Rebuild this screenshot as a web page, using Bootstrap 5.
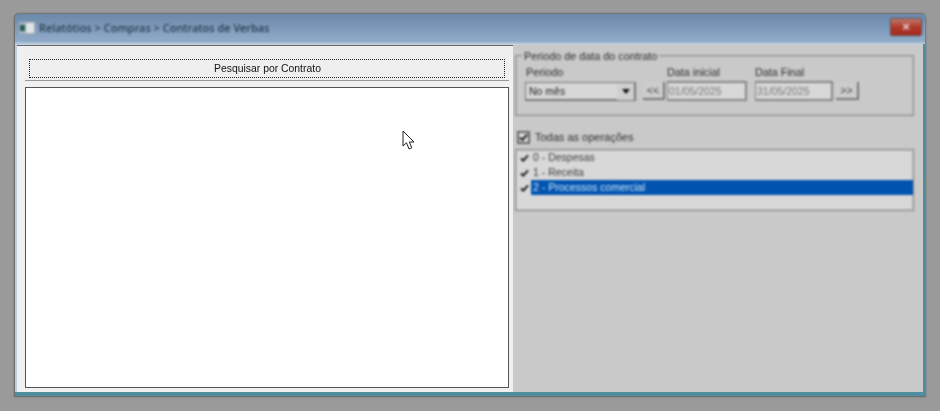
<!DOCTYPE html>
<html lang="pt">
<head>
<meta charset="utf-8">
<title>Contratos de Verbas</title>
<link href="https://cdn.jsdelivr.net/npm/bootstrap@5.3.0/dist/css/bootstrap.min.css" rel="stylesheet">
<style>
html,body{height:411px;overflow:hidden}
body{background:#9a9a9a;font-family:"Liberation Sans",Arial,sans-serif;font-size:11px;color:#111;padding:13px 14px 14px}
.win-frame{position:relative;height:384px;border:1px solid #6e6e6e;border-top-color:#777;border-right-color:#4f8e9e;border-radius:5px 5px 0 0;background:linear-gradient(#6b88aa,#8fabc8 27px,#b9cbdc 30px);box-shadow:0 0 2px #707070}
.win-title{height:30px;padding:0 0 2px 4px;gap:4px;filter:blur(.8px)}
.win-title-text{font-family:"Noto Sans",sans-serif;font-size:11px;color:#24354a;font-weight:500}
.win-close{align-self:flex-start;width:32px;height:18px;margin:4px 3px 0 auto;border:1px solid #6b4b4b;border-radius:2px;background:linear-gradient(#bd7a6e,#b23a2a 50%,#a32c1e);color:#ddd;font-size:13px;font-weight:700;line-height:15px;text-align:center}
.win-edge{height:352px;border-bottom:4px solid #4f8e9e;border-right:2px solid #4f8e9e}
.win-body{height:348px;margin-left:2px;border-top:1px solid #c5d2de;background:#c9c9c9}
.left-pane{width:496px;flex:none;background:#f0f0f0;padding:9px 4px 4px 8px;border-top:1px solid #666}
.search-bar{height:26px;padding:4px;background:#eee;border-bottom:1px solid #9a9a9a}
.search-btn{display:block;width:100%;height:19px;padding:0 0 0 1px;border:1px dotted #222;border-radius:0;background:#efefef;font-size:10.4px;line-height:17px;color:#111}
.search-btn span{display:block;filter:blur(.25px)}
.result-box{height:301px;margin-top:6px;background:#fff;border:1px solid #555}
.right-pane{flex:1;padding:10px 9px 0 2px;filter:blur(.8px);color:#2c2c2c}
.period-group{position:relative;height:61px;border:1px solid #8c8c8c;box-shadow:inset 0 0 0 1px #b5b5b5;padding:10px 9px 0;margin:0}
.period-title{position:absolute;left:6px;top:-6px;width:auto;float:none;margin:0;padding:0 2px;background:#c9c9c9;font-size:10.8px;line-height:13px;color:#2c2c2c}
.col-lbl{font-size:10.8px;line-height:13px;display:block;color:#2c2c2c}
.lbl-select{margin-left:1px}
.fake-select{width:111px;height:19px;margin-top:3px;border:1px solid #777;border-right-width:2px;border-bottom-width:2px;background:#d7d7d7;padding:2px 0 0 3px;align-items:center;font-size:10.5px;color:#222}
.fake-select i{margin:-2px 0 0 auto;width:17px;height:17px;background:#cfcfcf;display:flex;align-items:center;justify-content:center}
.fake-select i::after{content:"";border:4px solid transparent;border-top:5px solid #111;border-bottom:0}
.step-btn{height:18px;margin-bottom:1px;padding:0;border:0;border-right:2px solid #777;border-bottom:2px solid #777;border-radius:0;background:#ccc;font-size:10.5px;line-height:15px;color:#444}
.step-prev{width:22px;margin-left:7px;margin-right:2px}
.step-next{width:23px;margin-left:3px}
.date-box{height:20px;margin-top:2px;border:1px solid #858585;border-width:2px 2px 2px 1px;background:#d8d8d8;font-size:10.5px;line-height:16px;color:#777;padding:0 0 0 1px}
.date-from{width:80px}
.date-to{width:78px;margin-left:8px}
.all-row{margin-top:14px;height:14px;padding-left:2px;gap:5px;font-size:11px}
.all-box{width:13px;height:13px;border:2px solid #666;background:#ddd;display:flex;flex:none}
.ops-list{margin-top:5px;height:62px;border:1px solid #8a8a8a;box-shadow:inset 0 0 0 1px #bbb;background:#d8d8d8;padding:0 0 0 1px;border-radius:0}
.ops-row{height:15px;align-items:center;font-size:10.5px;color:#3c3c3c;border:0;background:none;padding:0;border-radius:0}
.ops-mark{width:14px;flex:none;display:flex;justify-content:center}
.ops-label{flex:1;padding-left:2px;line-height:15px}
.ops-on{background:#0054b0;color:#cfe0f5}
.mouse-arrow{position:absolute;left:387px;top:116px}
</style>
</head>
<body>
<div class="win-frame">
  <div class="win-title d-flex align-items-center">
    <svg width="16" height="12" viewBox="0 0 16 12"><rect width="16" height="12" fill="#a9b4ba"/><rect x="1" y="3" width="5" height="6" fill="#245f52"/><rect x="7" y="1" width="8" height="10" fill="#dfe4e6"/></svg>
    <span class="win-title-text">Relatótios &gt; Compras &gt; Contratos de Verbas</span>
    <div class="win-close">×</div>
  </div>
  <div class="win-edge">
  <div class="win-body d-flex">
    <div class="left-pane">
      <div class="search-bar"><button type="button" class="btn search-btn"><span>Pesquisar por Contrato</span></button></div>
      <div class="result-box"></div>
    </div>
    <div class="right-pane">
      <fieldset class="period-group">
        <legend class="period-title">Periodo de data do contrato</legend>
        <div class="d-flex align-items-end">
          <div>
            <span class="col-lbl lbl-select">Periodo</span>
            <div class="fake-select d-flex">No mês<i></i></div>
          </div>
          <button type="button" class="btn step-btn step-prev">&lt;&lt;</button>
          <div>
            <span class="col-lbl">Data inicial</span>
            <div class="date-box date-from">01/05/2025</div>
          </div>
          <div>
            <span class="col-lbl date-to">Data Final</span>
            <div class="date-box date-to">31/05/2025</div>
          </div>
          <button type="button" class="btn step-btn step-next">&gt;&gt;</button>
        </div>
      </fieldset>
      <div class="all-row d-flex align-items-center">
        <span class="all-box"><svg width="9" height="9" viewBox="0 0 9 9"><path d="M1 4.5 3.5 7 8 1.5" fill="none" stroke="#222" stroke-width="2"/></svg></span>
        <span>Todas as operações</span>
      </div>
      <div class="list-group ops-list">
        <div class="list-group-item d-flex ops-row"><span class="ops-mark"><svg width="9" height="8" viewBox="0 0 10 9"><path d="M1 5 3.5 7.5 9 1.5" fill="none" stroke="#111" stroke-width="2"/></svg></span><span class="ops-label">0 - Despesas</span></div>
        <div class="list-group-item d-flex ops-row"><span class="ops-mark"><svg width="9" height="8" viewBox="0 0 10 9"><path d="M1 5 3.5 7.5 9 1.5" fill="none" stroke="#111" stroke-width="2"/></svg></span><span class="ops-label">1 - Receita</span></div>
        <div class="list-group-item d-flex ops-row"><span class="ops-mark"><svg width="9" height="8" viewBox="0 0 10 9"><path d="M1 5 3.5 7.5 9 1.5" fill="none" stroke="#111" stroke-width="2"/></svg></span><span class="ops-label ops-on">2 - Processos comercial</span></div>
      </div>
    </div>
  </div>
  </div>
  <svg class="mouse-arrow" width="14" height="21" viewBox="0 0 14 21"><path d="M1 1V16L4.5 12.8 7 19 9.8 17.8 7.3 12H12Z" fill="#fff" stroke="#222" stroke-width="1"/></svg>
</div>
</body>
</html>
